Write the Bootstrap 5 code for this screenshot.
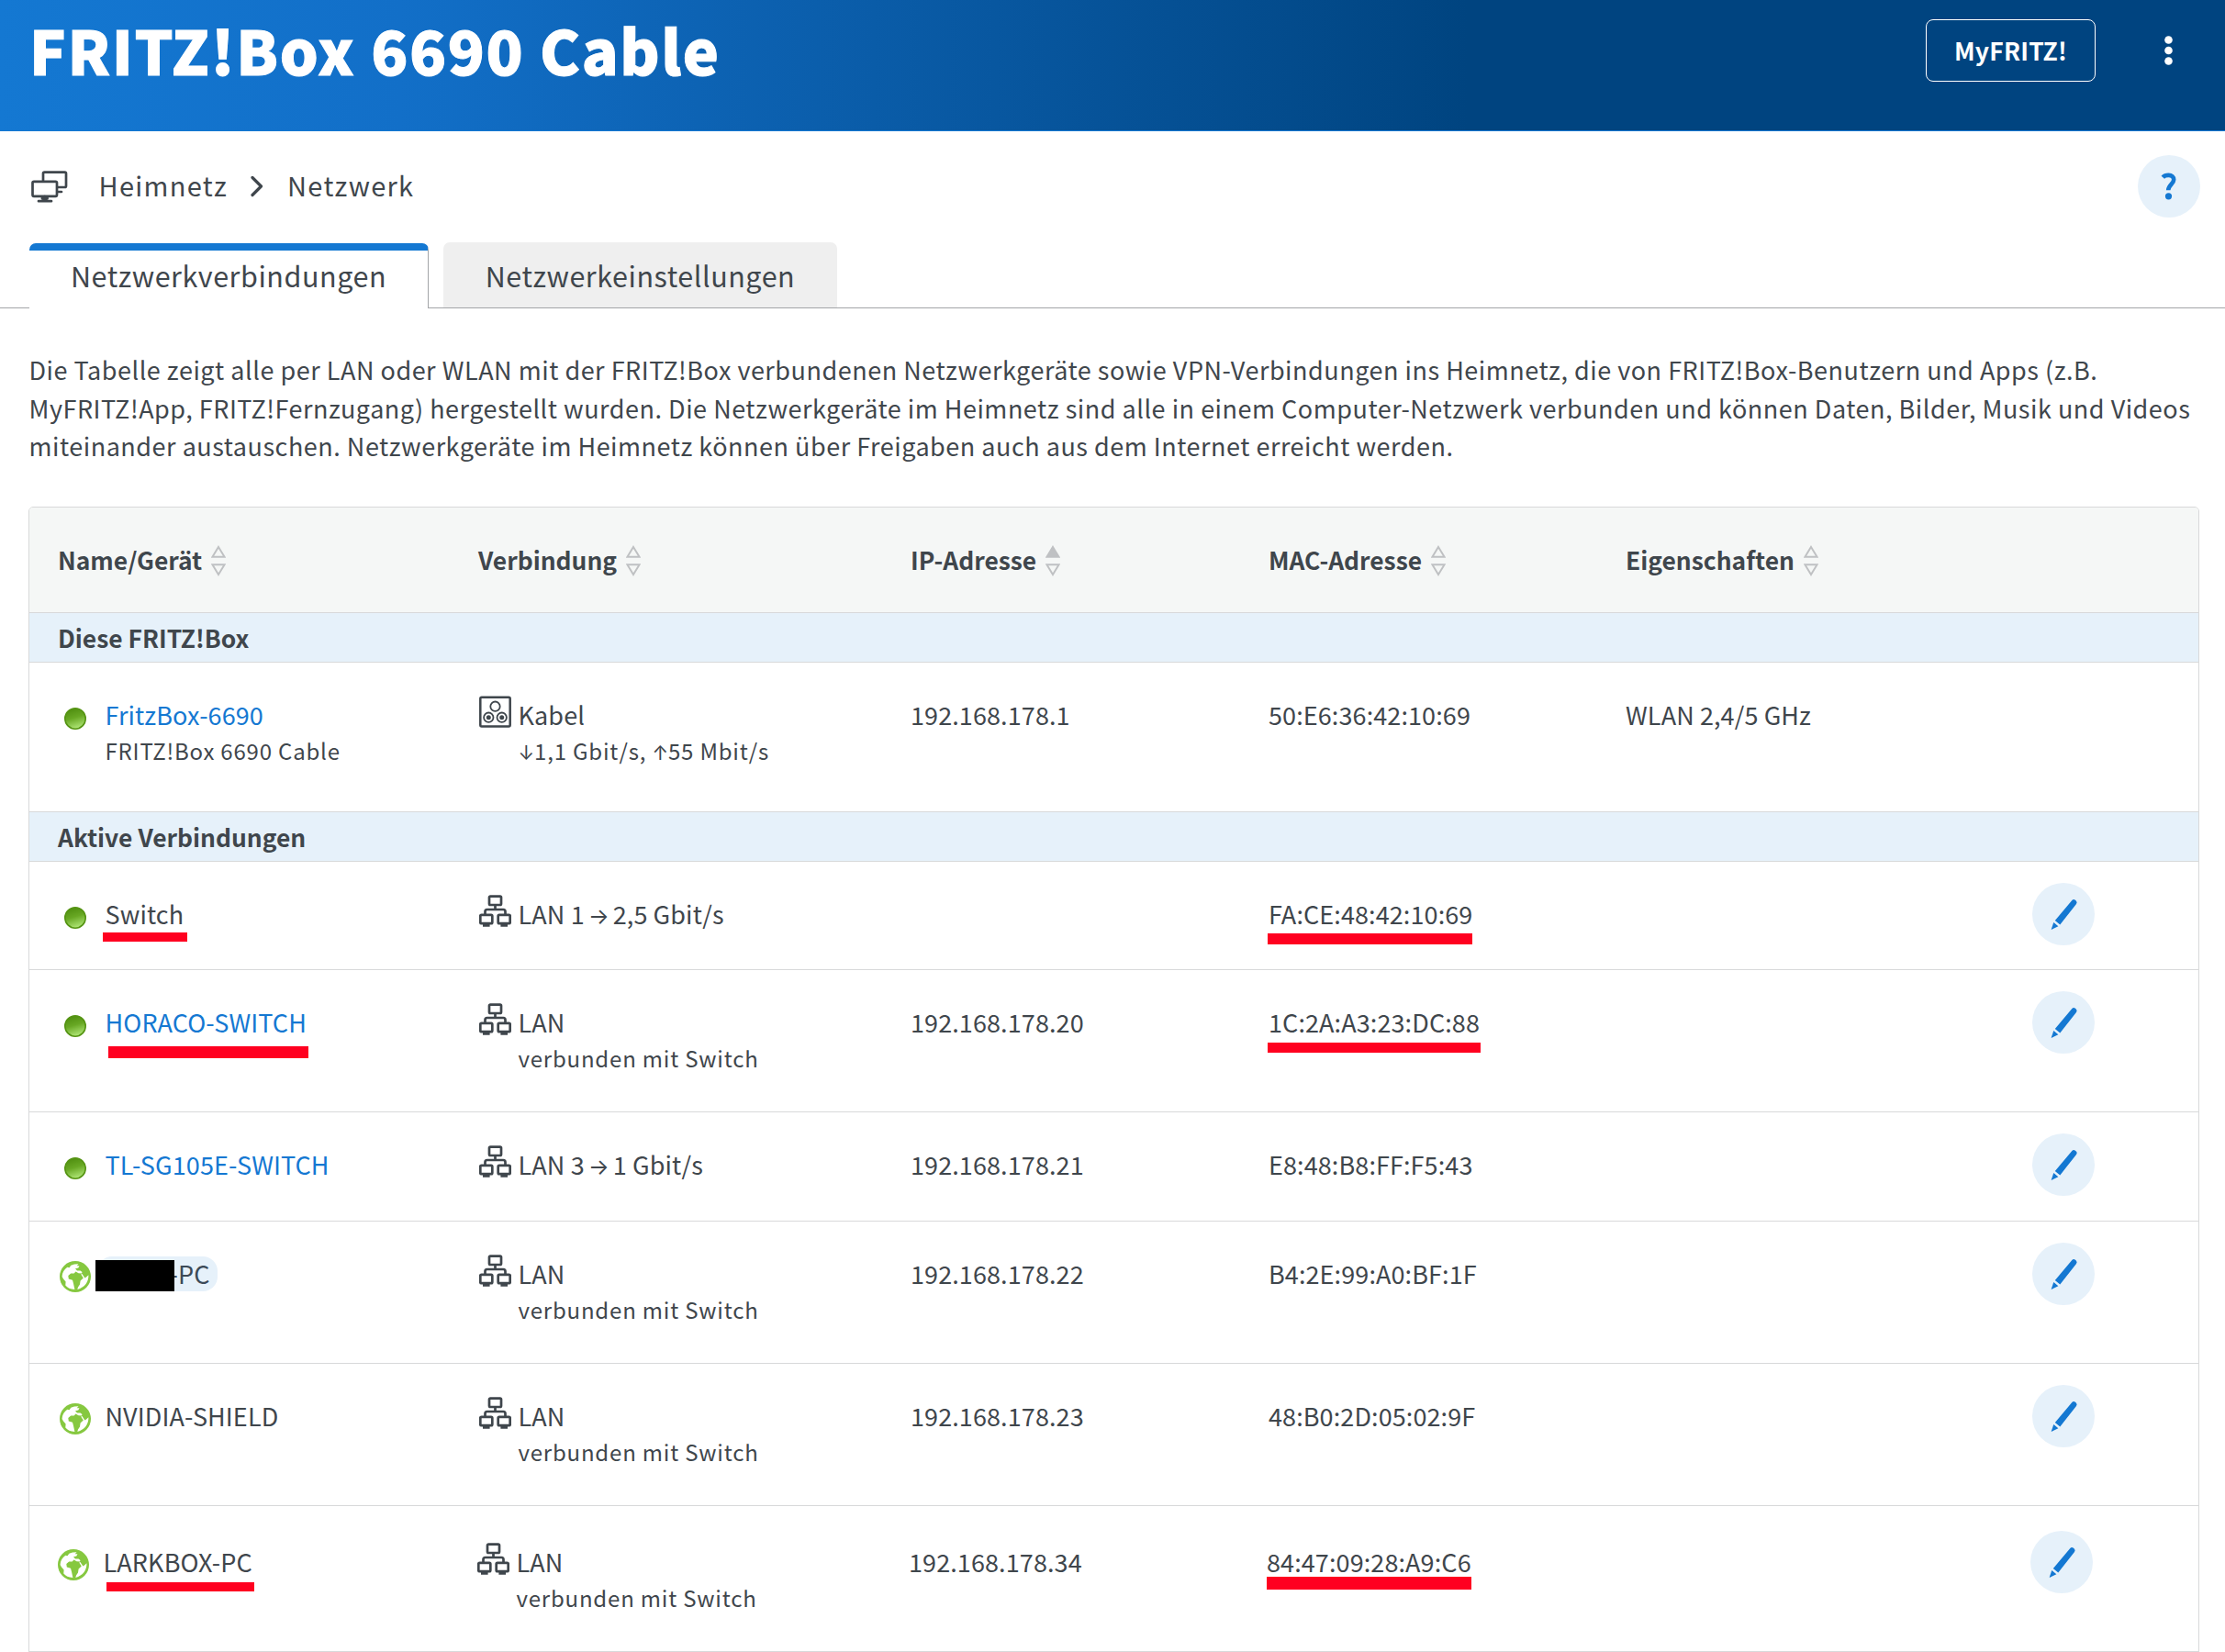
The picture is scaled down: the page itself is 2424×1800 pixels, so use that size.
<!DOCTYPE html>
<html lang="de">
<head>
<meta charset="utf-8">
<meta name="viewport" content="width=device-width, initial-scale=1">
<title>FRITZ!Box 6690 Cable</title>
<link href="https://cdn.jsdelivr.net/npm/bootstrap@5.3.0/dist/css/bootstrap.min.css" rel="stylesheet">
<style>
body{font-family:"Noto Sans CJK SC",sans-serif;font-size:27px;line-height:40px;color:#3f464c;background:#fff;overflow:hidden}
.topbar{height:143px;padding:20px 27px 0 32px;border-bottom:1px solid #1478d2;background:linear-gradient(90deg,#1478d2 0%,#126fc8 18%,#004480 66%)}
.topbar h1{font-size:66px;line-height:66px;font-weight:900;letter-spacing:1.6px;-webkit-text-stroke:1px #fff}
.btn-my{width:185px;height:68px;margin:1px -2px 0 0;border:1px solid #fff;border-radius:8px;color:#fff;font-size:26.5px;line-height:40px;font-weight:700;letter-spacing:.2px;padding:0}
.crumbs{height:68px;margin:26px 27px 27px 34px}
.crumbs .trail{font-size:29px;letter-spacing:1.3px;padding-bottom:4px}
.round-btn{width:68px;height:68px;border-radius:50%;background:#e6f1fa;color:#1478d2}
.tabs{border-bottom:1px solid #a3a5a8;gap:16px;padding-left:32px}
.tabs .nav-link{height:71px;padding:16px 0 0;border:0;border-radius:7px 7px 0 0;font-size:30.5px;letter-spacing:.55px;color:#3f464c;text-align:center;background:#efefef;width:429px;margin-bottom:0}
.tabs .nav-link.active{width:435px;margin-top:1px;height:71px;margin-bottom:-1px;padding-top:7px;color:#3f464c;background:#fff;border-top:8px solid #1478d2;border-right:1px solid #a3a5a8}
.intro{margin:46px 0 45px 31.5px;line-height:41.5px;letter-spacing:.515px;white-space:nowrap}
.devices{margin:0 28px 0 31px;border:1px solid #d8d9da;border-radius:5px 5px 0 0;overflow:hidden}
.devices table{table-layout:fixed;border-collapse:separate;border-spacing:0;width:2363px;margin:0;color:inherit;letter-spacing:.1px}
.devices th,.devices td{vertical-align:top;padding:37px 0 0 31px;border:0;border-bottom:1px solid #d8d9da;white-space:nowrap}
.devices thead th{height:115px;background:#f5f7f6;font-size:26.4px;font-weight:700;letter-spacing:0}
.devices .band th{height:54px;padding-top:7px;background:#e6f1fa;font-size:26.4px;font-weight:700;letter-spacing:0}
.devices td:last-child{padding-top:23px}
.h-a{height:118px}.h-b{height:119px}.h-c{height:155px}.h-d{height:163px}.h-e{height:159px}
.devices .h-e td{padding-top:41px;padding-left:29px}
.devices .h-e td:last-child{padding-top:27px}
.devices a{color:#1478d2;text-decoration:none}
.sort{margin:4px 0 0 10px}
.state{margin:6px 15.5px 0 2px}
.link-ico{margin:-1px 7.5px 0 1px}
.sub{font-size:24px;line-height:36px;letter-spacing:.8px;margin-top:1px}
.arr{font-family:Inter,sans-serif;font-size:.88em;letter-spacing:0}
.arr-r{margin:0 -2px}
.bar-red{position:absolute;margin-top:-1px;background:#ff0020}
.redact{position:absolute;left:-11px;top:5px;width:86px;height:34px;background:#000}
.pill-name{width:131px;height:38px;line-height:38px;margin:1px 0 0 -9px;padding-right:8px;border-radius:16px;background:#e6f1fa;text-align:right;color:#3c4a57}
</style>
</head>
<body>
<svg width="0" height="0" class="position-absolute">
<defs>
<linearGradient id="gd" x1="0.35" y1="0" x2="0.65" y2="1"><stop offset="0" stop-color="#4f8e10"/><stop offset=".45" stop-color="#68a824"/><stop offset="1" stop-color="#b4ea7c"/></linearGradient>
<symbol id="i-dot" viewBox="0 0 34 34"><circle cx="17" cy="18" r="11.2" fill="url(#gd)" stroke="#559413" stroke-width="1.6"/></symbol>
<symbol id="i-globe" viewBox="0 0 34 34"><circle cx="17" cy="17" r="17" fill="#86c840"/>
<g fill="#fff"><path d="M2.600 17C2.800 12.500 5 9 8.300 6.700L10.500 7.300L12.300 4.800L16 3.400L20.500 3.200L18.700 5.300L21.500 5.200L20.300 7.600L17 8.200L19 10.600L22.500 10.400L24.500 12L24 13.600L20.500 13.200L17.500 11.600L15.600 13.400L12.200 13.600L9.300 16L9.800 19.600L14 20.800L15 24.500L16.400 30.900C11.500 30.900 8.600 29.300 6.300 26.500L6.600 22.600L4 19.500Z"/>
<path d="M31.400 15.200C31.800 22 27.500 28.900 19.300 30.900L20 28.500L22 25.500L22.600 21.500L25.800 18.600L23.200 14.400L24.400 14L27.500 18.600L29.300 17.200Z"/></g></symbol>
<symbol id="i-lan" viewBox="0 0 35 35"><g fill="none" stroke="#3f464c" stroke-width="2.700" stroke-linejoin="round"><rect x="11" y="1.600" width="13" height="9.400" rx="1.200"/><path d="M17.500 11v5M6.500 21.500v-3.300q0-2.200 2.200-2.200h17.600q2.200 0 2.200 2.200v3.300"/><rect x="1.300" y="21.800" width="13" height="9.400" rx="1.200"/><rect x="20.700" y="21.800" width="13" height="9.400" rx="1.200"/></g><path d="M4 31h7.600v3.800H4zM23.400 31H31v3.800h-7.600z" fill="#3f464c"/></symbol>
<symbol id="i-cable" viewBox="0 0 35 35"><g fill="none" stroke="#3f464c"><rect x="1.300" y="1.800" width="32.400" height="31.600" rx="1.500" stroke-width="2.500"/><g stroke-width="1.800"><circle cx="17.500" cy="11.700" r="5.200"/><circle cx="10.300" cy="23.700" r="5.200"/><circle cx="24.700" cy="23.700" r="5.200"/></g></g><circle cx="10.300" cy="23.700" r="2.500" fill="#3f464c"/><circle cx="24.700" cy="23.700" r="2.500" fill="#3f464c"/></symbol>
<symbol id="i-pen" viewBox="0 0 68 68"><path d="M43.300 19Q44.800 17.200 46.600 18.500L47.800 19.500Q49.400 21 48 23L30.300 45.400L24.800 41Z" fill="#1478d2"/><path d="M23.300 43L28.400 47.200L20.600 51Z" fill="#1478d2"/></symbol>
<symbol id="i-sort" viewBox="0 0 16 34"><path d="M8 2L14.600 12.800H1.400Z M8 32L14.600 21.200H1.400Z" fill="none" stroke="#bfc1c3" stroke-width="2"/></symbol>
<symbol id="i-sortup" viewBox="0 0 16 34"><path d="M8 2L14.600 12.800H1.400Z" fill="#bfc1c3" stroke="#bfc1c3" stroke-width="2"/><path d="M8 32L14.600 21.200H1.400Z" fill="none" stroke="#bfc1c3" stroke-width="2"/></symbol>
</defs>
</svg>

<header class="topbar d-flex justify-content-between align-items-start">
  <h1 class="m-0 text-white text-nowrap">FRITZ!Box 6690 Cable</h1>
  <div class="d-flex align-items-start">
    <button class="btn btn-my">MyFRITZ!</button>
    <svg width="68" height="70" viewBox="0 0 68 70" class="ms-5" fill="#fff"><circle cx="33.500" cy="23.500" r="4.300"/><circle cx="33.500" cy="35" r="4.300"/><circle cx="33.500" cy="46.500" r="4.300"/></svg>
  </div>
</header>

<div class="crumbs d-flex justify-content-between align-items-center">
  <div class="d-flex align-items-center">
    <svg width="40" height="35" viewBox="0 0 40 35" fill="none" stroke="#3f464c" stroke-width="2.700" stroke-linejoin="round" stroke-linecap="round"><path d="M13 10.500V3.200q0-1.500 1.500-1.500h22q1.500 0 1.500 1.500v13.300q0 1.500-1.500 1.500H29M29 23h4"/><rect x="1.500" y="11.800" width="26.500" height="16" rx="1.500"/><path d="M14.700 28v5M8 33.200h14"/><path d="M12.500 30h4.500" stroke-width="4"/></svg>
    <div class="trail d-flex align-items-center">
      <span style="margin-left:33.5px">Heimnetz</span>
      <svg width="14" height="24" viewBox="0 0 14 24" fill="none" stroke="#3f464c" stroke-width="3.200" stroke-linecap="round" stroke-linejoin="round" style="margin:4px 26px 0 25px"><path d="M2 2.500L11.500 12L2 21.500"/></svg>
      <span>Netzwerk</span>
    </div>
  </div>
  <button class="btn round-btn p-0 border-0 d-flex align-items-center justify-content-center"><svg width="68" height="68" viewBox="0 0 68 68" fill="none" stroke="#1478d2" stroke-width="4.600"><path d="M27.300 24.200C29 22.200 31.300 21.900 33.600 21.900C37 21.900 39.200 23.800 39.200 26.700C39.200 31.300 33.200 32.700 33.200 38.300"/><circle cx="33.500" cy="44.800" r="3.600" fill="#1478d2" stroke="none"/></svg></button>
</div>

<ul class="nav nav-tabs tabs">
  <li class="nav-item"><a class="nav-link active">Netzwerkverbindungen</a></li>
  <li class="nav-item"><a class="nav-link">Netzwerkeinstellungen</a></li>
</ul>

<p class="intro">Die Tabelle zeigt alle per LAN oder WLAN mit der FRITZ!Box verbundenen Netzwerkgeräte sowie VPN-Verbindungen ins Heimnetz, die von FRITZ!Box-Benutzern und Apps (z.B.<br>MyFRITZ!App, FRITZ!Fernzugang) hergestellt wurden. Die Netzwerkgeräte im Heimnetz sind alle in einem Computer-Netzwerk verbunden und können Daten, Bilder, Musik und Videos<br>miteinander austauschen. Netzwerkgeräte im Heimnetz können über Freigaben auch aus dem Internet erreicht werden.</p>

<div class="devices">
<table>
<colgroup><col style="width:458px"><col style="width:471px"><col style="width:390px"><col style="width:389px"><col style="width:443px"><col style="width:212px"></colgroup>
<thead><tr>
<th><div class="d-flex">Name/Gerät<svg class="sort" width="16" height="34"><use href="#i-sort"/></svg></div></th>
<th><div class="d-flex">Verbindung<svg class="sort" width="16" height="34"><use href="#i-sort"/></svg></div></th>
<th><div class="d-flex">IP-Adresse<svg class="sort" width="16" height="34"><use href="#i-sortup"/></svg></div></th>
<th><div class="d-flex">MAC-Adresse<svg class="sort" width="16" height="34"><use href="#i-sort"/></svg></div></th>
<th><div class="d-flex">Eigenschaften<svg class="sort" width="16" height="34"><use href="#i-sort"/></svg></div></th>
<th></th></tr></thead>
<tbody>
<tr class="band"><th colspan="6">Diese FRITZ!Box</th></tr>
<tr class="h-d">
<td><div class="d-flex"><svg class="state" width="34" height="34"><use href="#i-dot"/></svg><div><a href="#">FritzBox-6690</a><div class="sub">FRITZ!Box 6690 Cable</div></div></div></td>
<td><div class="d-flex"><svg class="link-ico" width="35" height="35"><use href="#i-cable"/></svg><div>Kabel<div class="sub"><span class="arr">↓</span>1,1 Gbit/s, <span class="arr">↑</span>55 Mbit/s</div></div></div></td>
<td>192.168.178.1</td><td>50:E6:36:42:10:69</td><td>WLAN 2,4/5 GHz</td><td></td></tr>
<tr class="band"><th colspan="6">Aktive Verbindungen</th></tr>
<tr class="h-a">
<td><div class="d-flex"><svg class="state" width="34" height="34"><use href="#i-dot"/></svg><div class="position-relative">Switch<i class="bar-red" style="left:-3px;top:41px;width:92px;height:10px"></i></div></div></td>
<td><div class="d-flex"><svg class="link-ico" width="35" height="35"><use href="#i-lan"/></svg><div>LAN 1 <span class="arr arr-r">→</span> 2,5 Gbit/s</div></div></td>
<td></td><td><div class="position-relative">FA:CE:48:42:10:69<i class="bar-red" style="left:-1px;top:42px;width:223px;height:12px"></i></div></td><td></td>
<td><button class="btn round-btn p-0 border-0 d-block"><svg class="d-block" width="68" height="68"><use href="#i-pen"/></svg></button></td></tr>
<tr class="h-c">
<td><div class="d-flex"><svg class="state" width="34" height="34"><use href="#i-dot"/></svg><div class="position-relative"><a href="#">HORACO-SWITCH</a><i class="bar-red" style="left:3px;top:47px;width:218px;height:13px"></i></div></div></td>
<td><div class="d-flex"><svg class="link-ico" width="35" height="35"><use href="#i-lan"/></svg><div>LAN<div class="sub">verbunden mit Switch</div></div></div></td>
<td>192.168.178.20</td><td><div class="position-relative">1C:2A:A3:23:DC:88<i class="bar-red" style="left:-1px;top:43px;width:232px;height:11px"></i></div></td><td></td>
<td><button class="btn round-btn p-0 border-0 d-block"><svg class="d-block" width="68" height="68"><use href="#i-pen"/></svg></button></td></tr>
<tr class="h-b">
<td><div class="d-flex"><svg class="state" width="34" height="34"><use href="#i-dot"/></svg><a href="#">TL-SG105E-SWITCH</a></div></td>
<td><div class="d-flex"><svg class="link-ico" width="35" height="35"><use href="#i-lan"/></svg><div>LAN 3 <span class="arr arr-r">→</span> 1 Gbit/s</div></div></td>
<td>192.168.178.21</td><td>E8:48:B8:FF:F5:43</td><td></td>
<td><button class="btn round-btn p-0 border-0 d-block"><svg class="d-block" width="68" height="68"><use href="#i-pen"/></svg></button></td></tr>
<tr class="h-c">
<td><div class="d-flex"><svg class="state" width="34" height="34"><use href="#i-globe"/></svg><div class="position-relative"><div class="pill-name">-PC</div><i class="redact"></i></div></div></td>
<td><div class="d-flex"><svg class="link-ico" width="35" height="35"><use href="#i-lan"/></svg><div>LAN<div class="sub">verbunden mit Switch</div></div></div></td>
<td>192.168.178.22</td><td>B4:2E:99:A0:BF:1F</td><td></td>
<td><button class="btn round-btn p-0 border-0 d-block"><svg class="d-block" width="68" height="68"><use href="#i-pen"/></svg></button></td></tr>
<tr class="h-c">
<td><div class="d-flex"><svg class="state" width="34" height="34"><use href="#i-globe"/></svg><div>NVIDIA-SHIELD</div></div></td>
<td><div class="d-flex"><svg class="link-ico" width="35" height="35"><use href="#i-lan"/></svg><div>LAN<div class="sub">verbunden mit Switch</div></div></div></td>
<td>192.168.178.23</td><td>48:B0:2D:05:02:9F</td><td></td>
<td><button class="btn round-btn p-0 border-0 d-block"><svg class="d-block" width="68" height="68"><use href="#i-pen"/></svg></button></td></tr>
<tr class="h-e">
<td><div class="d-flex"><svg class="state" width="34" height="34"><use href="#i-globe"/></svg><div class="position-relative">LARKBOX-PC<i class="bar-red" style="left:3px;top:43px;width:161px;height:10px"></i></div></div></td>
<td><div class="d-flex"><svg class="link-ico" width="35" height="35"><use href="#i-lan"/></svg><div>LAN<div class="sub">verbunden mit Switch</div></div></div></td>
<td>192.168.178.34</td><td><div class="position-relative">84:47:09:28:A9:C6<i class="bar-red" style="left:0;top:37px;width:223px;height:14px"></i></div></td><td></td>
<td><button class="btn round-btn p-0 border-0 d-block"><svg class="d-block" width="68" height="68"><use href="#i-pen"/></svg></button></td></tr>
</tbody>
</table>
</div>
<script src="https://cdn.jsdelivr.net/npm/bootstrap@5.3.0/dist/js/bootstrap.bundle.min.js"></script>
</body>
</html>
